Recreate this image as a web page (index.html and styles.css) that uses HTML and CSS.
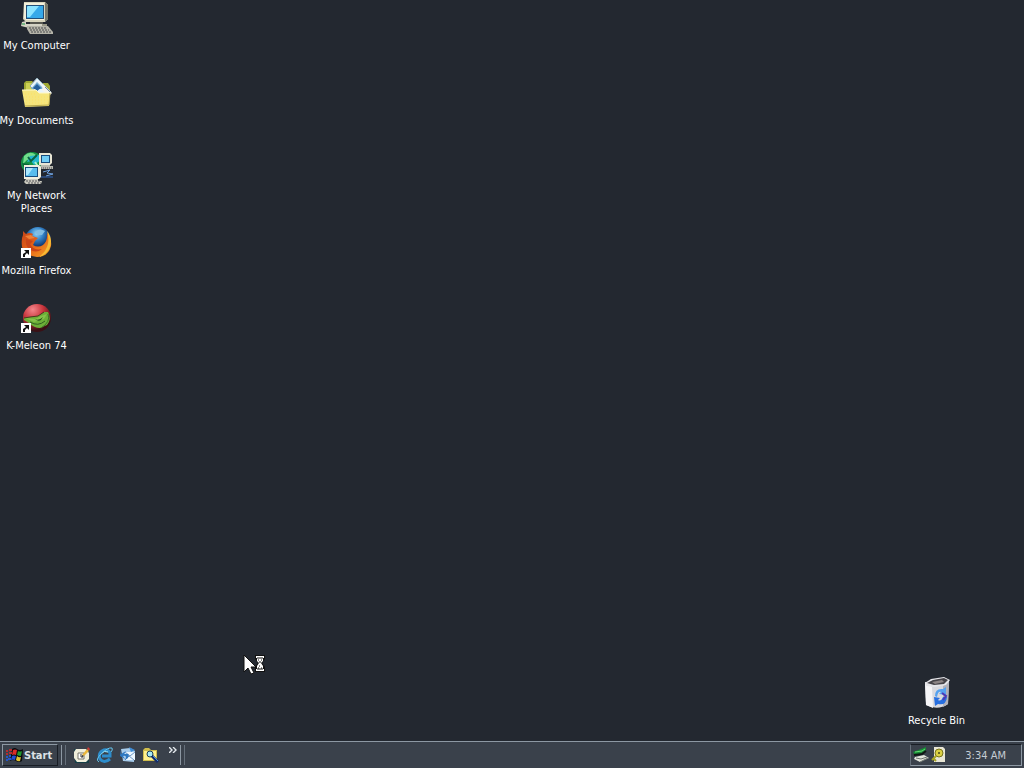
FILE: index.html
```html
<!DOCTYPE html>
<html lang="en">
<head>
  <meta charset="UTF-8" />
  <meta name="viewport" content="width=device-width, initial-scale=1.0"/>
  <title>Desktop</title>
  <link rel="stylesheet" href="styles.css">
</head>
<body>

<main class="desktop">
  <div class="icons">
    <a class="icon" href="#computer">
      <svg width="32" height="32" viewBox="0 0 32 32">
        <path d="M3 0L6 0H24L27 3V17L24 20H5L2 17Z" fill="#d8d5bd"/>
        <path d="M24 0L27 3V17L24 20Z" fill="#77786b"/>
        <path d="M3 1H23V18H5L3 16Z" fill="#f3f0db"/>
        <rect x="5" y="3" width="18" height="14" fill="#214f78"/>
        <rect x="6" y="4" width="16" height="12" fill="#36a9e9"/>
        <path d="M7 4H18L9 15H6V5Z" fill="#8ce4ff"/>
        <path d="M9 20H22V22H9Z" fill="#55564e"/>
        <path d="M1 20L5 19V22H26V26H8L0 24Z" fill="#d5d4c6"/>
        <path d="M6 24H27L32 30V32H9L6 27Z" fill="#b4b3a8"/>
        <path d="M8 26H26M9 28H28M10 30H30" stroke="#4b4c4e" stroke-dasharray="2 1"/>
        <path d="M21 22H26V24H21Z" fill="#989786"/>
        <path d="M1 22H4" stroke="#1e9c48"/>
      </svg>
      <span>My Computer</span>
    </a>
    <a class="icon" href="#documents">
      <svg width="32" height="32" viewBox="0 0 32 32">
        <path d="M3 6L5 4H11L13 6H27L29 9V15H3Z" fill="#9fa834"/>
        <path d="M5 6H11L13 9V14H5Z" fill="#cbd052"/>
        <path d="M16 1L30 15L23 23L9 9Z" fill="#e9f4fa" stroke="#8dabba"/>
        <path d="M16 5L23 12H10Z" fill="#74add4"/>
        <path d="M16 7L20 11L16 14L12 11Z" fill="#245f9c"/>
        <path d="M22 7L31 16L28 19L21 13Z" fill="#f6f5ed"/>
        <path d="M24 10L29 15" stroke="#78909f"/>
        <path d="M1 13H15L18 16H29L28 29L4 30Z" fill="#f5e57d"/>
        <path d="M1 13H15L18 16H29" fill="none" stroke="#fff9c9"/>
        <path d="M4 29L28 28L29 16" fill="none" stroke="#b8a74b"/>
        <path d="M4 17H15M5 20H27M5 23H27M5 26H27" stroke="#ffdf65" stroke-dasharray="1 2"/>
      </svg>
      <span>My Documents</span>
    </a>
    <a class="icon" href="#network">
      <svg width="32" height="32" viewBox="0 0 32 32">
        <circle cx="11" cy="11" r="11" fill="#159444"/>
        <path d="M3 4Q9 -2 15 3L12 7L6 8L2 12Z" fill="#72dc8b"/>
        <path d="M9 4L18 3L20 8L13 13L10 9L6 10Z" fill="#24b8d1"/>
        <path d="M7 5L10 9L16 3" fill="none" stroke="#0b6540" stroke-width="2"/>
        <path d="M1 11L8 12L8 19Q3 18 1 11Z" fill="#0a6838"/>
        <path d="M14 10L18 16" stroke="#a8f6ca" stroke-width="2"/>
        <path d="M18 1H29L31 3V11L29 13H18Z" fill="#e8e6d5"/>
        <rect x="20" y="3" width="9" height="8" fill="#174c7d"/>
        <rect x="21" y="4" width="7" height="6" fill="#70cdf6"/>
        <path d="M20 13H29V14H32V17H19V15Z" fill="#b9b9b0"/>
        <path d="M20 16H31" stroke="#4a4b4f" stroke-dasharray="1 1"/>
        <path d="M3 13H18L20 15V25L18 27H3Z" fill="#f0eedf"/>
        <rect x="4" y="15" width="13" height="10" fill="#164b7d"/>
        <rect x="5" y="16" width="11" height="8" fill="#58bced"/>
        <path d="M5 16H12L7 23H5Z" fill="#a9e8ff"/>
        <path d="M5 27H17V29H21L20 32H5L3 30Z" fill="#cac9be"/>
        <path d="M5 29H19M7 31H20" stroke="#54555a" stroke-dasharray="2 1"/>
        <path d="M22 20L29 18L26 21L32 22L25 24" fill="none" stroke="#6fa2df"/>
        <path d="M20 25H32" stroke="#3164b5"/>
      </svg>
      <span>My Network<br>Places</span>
    </a>
    <a class="icon" href="#firefox">
      <svg width="32" height="32" viewBox="0 0 32 32">
        <defs>
          <radialGradient id="globe" cx="45%" cy="25%">
            <stop offset="0" stop-color="#93d7f6"/>
            <stop offset="0.5" stop-color="#3482c7"/>
            <stop offset="1" stop-color="#113771"/>
          </radialGradient>
          <linearGradient id="fox" x1="0" y1="0" x2="1" y2="1">
            <stop offset="0" stop-color="#c64419"/>
            <stop offset="0.5" stop-color="#e56418"/>
            <stop offset="1" stop-color="#f7a927"/>
          </linearGradient>
        </defs>
        <circle cx="17" cy="13" r="13" fill="url(#globe)"/>
        <path d="M15 4Q19 1 24 4L21 8L17 8L14 6Z" fill="#82bce1"/>
        <path d="M2 4L5 7Q9 5 12 7L11 9L17 11L14 14L12 18Q17 21 22 18Q27 14 26 6Q31 12 30 19Q27 30 16 30Q5 29 1 20Q0 12 2 8Z" fill="url(#fox)"/>
        <path d="M26 4Q32 11 29 20Q26 28 18 30Q25 25 27 17Q28 10 26 4Z" fill="#f7bc35"/>
        <path d="M5 12L12 14L9 17Q12 24 21 22Q15 27 8 22Q4 18 5 12Z" fill="#c94519"/>
        <path d="M4 9L10 8L14 11L8 12Z" fill="#ee8138"/>
        <use href="#shortcut"/>
      </svg>
      <span>Mozilla Firefox</span>
    </a>
    <a class="icon" href="#kmeleon">
      <svg width="32" height="32" viewBox="0 0 32 32">
        <defs>
          <radialGradient id="ball" cx="35%" cy="20%" r="75%">
            <stop offset="0" stop-color="#f3858a"/>
            <stop offset="0.5" stop-color="#c8343b"/>
            <stop offset="1" stop-color="#3a1015"/>
          </radialGradient>
          <g id="shortcut">
            <rect x="0" y="21" width="10" height="10" fill="#fff"/>
            <path d="M3 23H8V28L6 26L4 28V30H2V27L5 25Z" fill="#111"/>
          </g>
        </defs>
        <circle cx="16" cy="16" r="14" fill="url(#ball)"/>
        <path d="M3 16L9 15L17 14L23 10L27 10Q31 17 26 23L19 26Q13 26 8 21L3 18Z" fill="#6caf37"/>
        <path d="M4 16L14 17L20 14L26 12L23 17L13 20Z" fill="#84c249"/>
        <path d="M14 17Q18 19 22 15L20 18Q17 20 14 17Z" fill="#224c1c"/>
        <path d="M9 20Q17 25 24 19" fill="none" stroke="#315d20"/>
        <path d="M3 16L9 15L17 14L23 10" fill="none" stroke="#4b371e"/>
        <path d="M27 12Q30 20 20 26" fill="none" stroke="#3b7426"/>
        <use href="#shortcut"/>
      </svg>
      <span>K-Meleon 74</span>
    </a>
  </div>

  <a class="icon recycle" href="#recycle">
    <svg width="32" height="32" viewBox="0 0 32 32">
      <path d="M4 5L28 4L27 27Q17 34 5 28Z" fill="#d9d9de"/>
      <path d="M4 6L11 10L12 31L5 28Z" fill="#f5f5f7"/>
      <path d="M22 9L28 5L27 27L22 30Z" fill="#b1b1b9"/>
      <path d="M4 6L10 2L23 0L29 3L25 8L14 10L5 9Z" fill="#e6e6ea"/>
      <path d="M6 6L12 3L23 1L27 3L23 7L13 8Z" fill="#454348"/>
      <path d="M11 5L21 3L23 5L14 7Z" fill="#8d8585"/>
      <path d="M14 19Q14 11 22 12L25 10V18L18 17L20 15Q17 14 16 20Z" fill="#55a2f0"/>
      <path d="M13 20L19 21L17 23Q20 25 22 20H26Q25 29 17 27L14 29Z" fill="#276fe0"/>
      <path d="M21 16L25 19L22 23" fill="none" stroke="#4c38b6" stroke-width="2"/>
    </svg>
    <span>Recycle Bin</span>
  </a>

  <svg class="cursor" width="22" height="22" viewBox="0 0 22 22">
    <path d="M1 1V18L5 14L8 20L11 19L8 13H13Z" fill="#fff" stroke="#111"/>
    <path d="M12 1H22V5L19 9L22 13V18H12V13L15 9L12 5Z" fill="#111"/>
    <path d="M13 2H21V4H20V7L18 9L20 12V15H21V17H13V15H14V12L16 9L14 7V4H13Z" fill="#fff"/>
    <path d="M14 4H20M15 6H16M18 6H19M16 8H18M16 12H17M15 14H16M18 14H19M14 15H20" stroke="#111"/>
  </svg>
</main>

<footer class="taskbar">
  <button class="start" type="button">
    <svg width="18" height="16" viewBox="0 0 18 16">
      <path d="M6 2Q9 0 11 2Q14 4 17 2L16 14Q13 16 10 14Q7 12 4 14Z" fill="#090b0f"/>
      <path d="M7 3Q9 2 11 3L10 8Q8 7 6 8Z" fill="#db2c27"/>
      <path d="M12 4Q14 5 16 4L15 9Q13 9 11 8Z" fill="#21972e"/>
      <path d="M6 9Q8 8 10 9L9 13Q7 12 5 13Z" fill="#244ed1"/>
      <path d="M11 9Q13 11 15 10L14 14Q12 15 10 13Z" fill="#dfc232"/>
      <path d="M0 4H2M3 3H6M0 7H2M3 6H6" stroke="#b32c31" stroke-width="2"/>
      <path d="M0 10H2M3 9H5M0 13H2M2 12H5" stroke="#2454c7" stroke-width="2"/>
    </svg>
    <span>Start</span>
  </button>
  <span class="divider"></span>
  <nav class="quick-launch" aria-label="Quick Launch">
    <button type="button" aria-label="Show Desktop">
      <svg width="16" height="16" viewBox="0 0 16 16">
        <path d="M0 2H15V16H1Z" fill="#163e47"/>
        <path d="M2 2H12L15 6V12L12 15H3L0 11V5Z" fill="#f0eedb"/>
        <path d="M4 6H10V12H4Z" fill="#fff" stroke="#77756a"/>
        <path d="M7 7V10H9" fill="none" stroke="#333"/>
        <path d="M8 8L13 2L15 4L10 9Z" fill="#e9b63c"/>
        <path d="M13 2L14 0L16 2L15 4Z" fill="#c93b37"/>
        <path d="M8 8L8 10L10 9Z" fill="#222"/>
      </svg>
    </button>
    <button type="button" aria-label="Internet Explorer">
      <svg width="16" height="16" viewBox="0 0 16 16">
        <path d="M13 12Q7 17 3 12Q1 7 5 4Q10 1 13 6V9H5" fill="none" stroke="#2d8dcc" stroke-width="3"/>
        <path d="M4 7Q7 3 11 5" fill="none" stroke="#a4edff"/>
        <path d="M2 15Q-2 13 4 7Q11 0 15 1Q16 3 14 5" fill="none" stroke="#65c4ec"/>
      </svg>
    </button>
    <button type="button" aria-label="Outlook Express">
      <svg width="16" height="16" viewBox="0 0 16 16">
        <path d="M1 2L10 1L15 4L14 15L3 14Z" fill="#a7ccec"/>
        <path d="M5 5H15V13H5Z" fill="#edf7ff"/>
        <path d="M5 5L10 9L15 5M5 13L9 9L14 13" fill="none" stroke="#6d98c5"/>
        <path d="M1 2V7L6 4L4 7Q11 6 8 11L5 13Q7 8 3 9L5 12L0 9Z" fill="#2e78c1"/>
        <path d="M9 0L15 3L11 5Z" fill="#3f8cd5"/>
      </svg>
    </button>
    <button type="button" aria-label="Search">
      <svg width="16" height="16" viewBox="0 0 16 16">
        <path d="M0 3L2 1H6L8 3H14V14H0Z" fill="#cfbd4d"/>
        <path d="M1 4H13V13H1Z" fill="#fff08c"/>
        <circle cx="7" cy="7" r="3" fill="#a9e8f3" stroke="#183d59"/>
        <path d="M9 9L15 15" stroke="#122b69" stroke-width="3"/>
        <path d="M10 9L15 14" stroke="#418edc"/>
      </svg>
    </button>
    <button class="more" type="button" aria-label="More shortcuts">
      <svg width="8" height="6" viewBox="0 0 8 6">
        <path d="M0 0L3 3L0 6M4 0L7 3L4 6" fill="none" stroke="#e4e9ed" stroke-width="1.4"/>
      </svg>
    </button>
  </nav>
  <span class="divider"></span>
  <div class="tray">
    <svg width="16" height="16" viewBox="0 0 16 16">
      <path d="M0 5L8 2L13 0V3L7 7L2 8Z" fill="#168b35"/>
      <path d="M2 5L9 4L12 2" fill="none" stroke="#66d772"/>
      <path d="M1 8L9 7L13 4" fill="none" stroke="#101713" stroke-width="2"/>
      <path d="M2 10L11 8L16 11L7 15L1 12Z" fill="#e2e5dc"/>
      <path d="M3 11L8 12L14 10M7 15L15 11" fill="none" stroke="#6d736e"/>
    </svg>
    <svg width="16" height="16" viewBox="0 0 16 16">
      <path d="M3 0H12L14 2V15H3Z" fill="#e8e6d5"/>
      <circle cx="8" cy="6" r="4" fill="#d9cf42" stroke="#77741c"/>
      <circle cx="8" cy="6" r="1" fill="#45451b"/>
      <path d="M5 9L1 13M3 12L5 14" stroke="#a6a425" stroke-width="2"/>
    </svg>
    <time>3:34 AM</time>
  </div>
</footer>

</body>
</html>
```
FILE: styles.css
```css
:root {
  --desktop: #232830;
  --bar: #3a414b;
  --light: #8d98a3;
  --mid: #66707b;
  --dark: #191e25;
  --text: #ffffff;
}

* {
  box-sizing: border-box;
}

body {
  margin: 0;
  min-height: 100vh;
  display: flex;
  flex-direction: column;
  font-family: "DejaVu Sans Condensed", Tahoma, "DejaVu Sans", sans-serif;
  font-size: 11px;
  line-height: 13px;
  color: var(--text);
  background: var(--desktop);
}

svg {
  display: block;
  flex-shrink: 0;
}

button {
  margin: 0;
  padding: 0;
  border: none;
  background: none;
  color: inherit;
  font: inherit;
}

/* Desktop */
.desktop {
  position: relative;
  flex: 1;
}

.icons {
  width: 73px;
  padding-top: 2px;
}

.icon {
  display: flex;
  flex-direction: column;
  align-items: center;
  gap: 5px;
  width: 73px;
  height: 75px;
  color: var(--text);
  text-align: center;
  text-decoration: none;
  white-space: nowrap;
}

.recycle {
  position: absolute;
  right: 51px;
  bottom: -11px;
}

.cursor {
  position: absolute;
  left: 243px;
  top: 654px;
}

/* Taskbar */
.taskbar {
  position: relative;
  display: flex;
  align-items: center;
  padding: 2px;
  background: var(--bar);
  border-top: 1px solid var(--light);
}

.start {
  display: flex;
  align-items: center;
  width: 56px;
  height: 22px;
  padding-left: 3px;
  border: 1px solid;
  border-color: var(--light) var(--dark) var(--dark) var(--light);
  font-weight: bold;
  color: #dce1e6;
}

.divider {
  width: 5px;
  height: 20px;
  margin-left: 3px;
  border-left: 1px solid var(--light);
  border-right: 1px solid var(--mid);
}

.quick-launch {
  display: flex;
  align-items: center;
  gap: 7px;
  margin-left: 8px;
}

.quick-launch .more {
  align-self: flex-start;
  margin-left: 3px;
}

.tray {
  display: flex;
  align-items: center;
  gap: 2px;
  height: 22px;
  margin-left: auto;
  padding: 0 15px 0 2px;
  border: 1px solid;
  border-color: var(--dark) var(--light) var(--light) var(--mid);
}

.tray time {
  margin-left: 16px;
  color: #c5ccd3;
}
```
